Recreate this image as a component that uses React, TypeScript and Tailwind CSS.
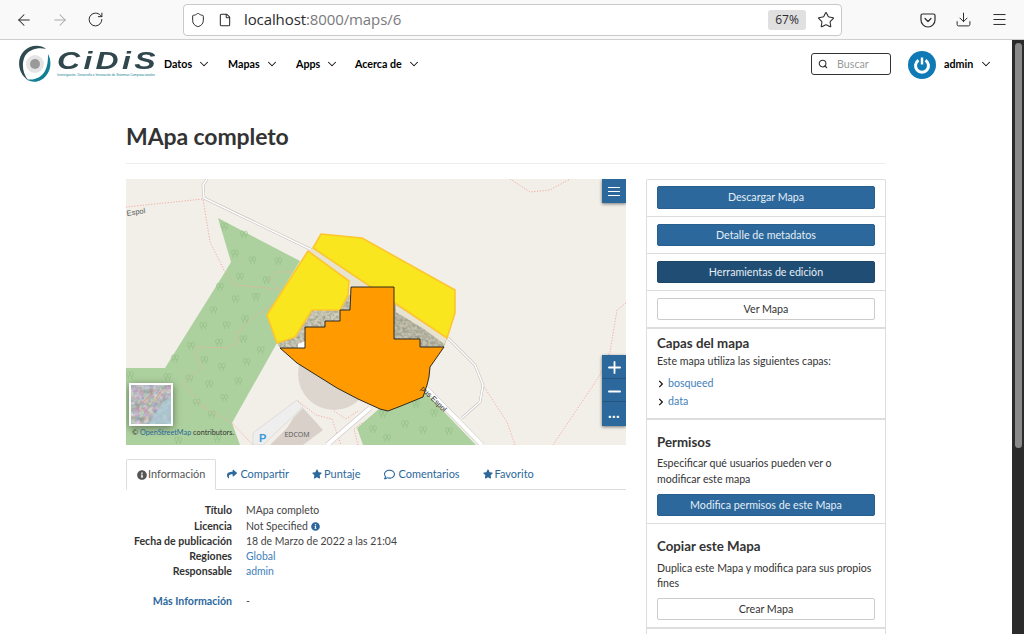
import { ArrowLeft, ArrowRight, RotateCw, Shield, File, Star, Download, Menu, Search, ChevronDown, Plus, Minus } from "lucide-react";
import { FaInfoCircle, FaShare, FaStar, FaRegComment, FaChevronRight } from "react-icons/fa";

const zt = (x: number, y: number): [number, number] => [x / 3 - 6, y / 3 - 4];
const trees: [number, number][] = [
  [313,155],[372,178],[345,235],[397,255],[475,258],[360,305],[300,335],[440,315],[347,372],[408,365],[280,405],[375,432],[320,450],[250,452],[297,502],[370,492],[213,512],[422,525],[380,560],[253,555],[305,575],[165,550],[143,605],[208,610],[268,627],[355,618],[313,668],[230,682],[275,718],[175,795],[292,790],[30,600],
].map(([x, y]) => zt(x, y));
const trees2: [number, number][] = [[257,235],[290,225],[308,234],[279,245],[297,251],[323,252],[261,259],[247,250]];

function MapArt() {
  return (
    <svg viewBox="0 0 500 266" className="block w-full h-full">
      <defs>
        <filter id="noise" x="0" y="0" width="100%" height="100%" colorInterpolationFilters="sRGB">
          <feTurbulence type="fractalNoise" baseFrequency="0.35" numOctaves="2" seed="4" />
          <feColorMatrix values="0 0 0 0 0.42  0 0 0 0 0.46  0 0 0 0 0.36  0.7 0.7 0 0 -0.5" />
          <feComposite in2="SourceAlpha" operator="in" />
          <feMerge>
            <feMergeNode in="SourceGraphic" />
            <feMergeNode />
          </feMerge>
        </filter>
      </defs>
      <rect width="500" height="266" fill="#f2efe9" />
      <polygon points="92,39 174,82 141,136 151,164 106,244 114,266 0,266 0,189 39,189 99,93 105,83" fill="#add19e" />
      <polygon points="254,229 231,249 237,266 350,266 299,213" fill="#add19e" />
      {[...trees, ...trees2].map(([x, y], i) => (
        <g key={i} fill="none" stroke="#94bf86" strokeWidth="0.7">
          <ellipse cx={x - 1.8} cy={y - 1} rx="1.6" ry="2.4" />
          <ellipse cx={x + 1.8} cy={y - 1} rx="1.6" ry="2.4" />
          <path d={`M${x - 1.8} ${y + 1}v3M${x + 1.8} ${y + 1}v3`} />
        </g>
      ))}
      <circle cx="208" cy="195" r="36" fill="#ddd6cf" />
      <polygon points="127,254 171,221 177,228 137,266 127,266" fill="#eeeeee" stroke="#d5d0ca" strokeWidth="0.6" />
      <polygon points="144,266 161,249 168,238 177,229 197,251 177,266" fill="#d9d0c9" />
      <g fill="none" stroke="#f7a9a1" strokeWidth="1" strokeDasharray="1.2 1.6">
        <path d="M0 28L77 20L84 63L99 93L109 106L141 109L154 111L144 101L151 93L167 93" />
        <path d="M151 123L131 136L112 153L111 164L101 169L71 168L69 176L76 189L57 203L74 226L106 244L127 266" />
        <path d="M384 0L404 13L424 11L444 0" />
        <path d="M500 124L491 131L484 173L474 196L427 266" />
        <path d="M357 206L381 243L389 266" />
        <path d="M208 232L220 240L232 232M172 222L190 236L206 240L215 266M236 244L228 250L232 266" />
      </g>
      <g fill="none" strokeLinejoin="round">
        <path d="M81 0L77 6L78 19L188 72M322 159L349 186L357 206L354 223L336 239" stroke="#bdb9b4" strokeWidth="2.6" />
        <path d="M81 0L77 6L78 19L188 72M322 159L349 186L357 206L354 223L336 239" stroke="#ffffff" strokeWidth="1.6" />
        <path d="M299 208L356 266M244 229L201 266" stroke="#c9c5bf" strokeWidth="5" />
        <path d="M299 208L356 266M244 229L201 266" stroke="#ffffff" strokeWidth="4" />
      </g>
      <polygon points="268,124 321,159 318,168 294,168 268,160" fill="#c7c2b2" filter="url(#noise)" />
      <polygon points="270,126 321,159 318,165 298,150 270,133" fill="#e8e3d0" />
      <polygon points="182,72 187,69 268,124 268,128 225,108 223,102" fill="#e8e3d0" />
      <polygon points="186,131 224,116 224,131 214,142 199,148 179,148 179,169 154,169 151,164 169,158" fill="#d4d0c0" filter="url(#noise)" />
      <polygon points="172,165 179,162 179,169 172,169" fill="#ffffff" />
      <polygon points="195,55 236,59 329,111 329,134 321,159 187,69" fill="#f9e61e" stroke="#fdc62e" strokeWidth="1.6" strokeLinejoin="round" />
      <polygon points="182,72 223,102 222,116 214,131 186,131 169,158 151,164 141,136" fill="#f9e61e" stroke="#fdc62e" strokeWidth="1.6" strokeLinejoin="round" />
      <polygon points="154,169 179,169 179,148 199,148 199,142 214,142 214,131 224,131 225,108 268,108 268,160 294,160 294,168 318,168 304,188 303,198 301,206 297,218 275,227 262,232 254,230 232,220 211,209 171,184" fill="#ff9b00" stroke="#1a1a1a" strokeWidth="0.9" strokeLinejoin="round" />
      <text x="0.500" y="36" transform="rotate(-9 7 33)" fontSize="7.5" fill="#555" fontFamily="Liberation Sans, sans-serif">Espol</text>
      <text x="296" y="214" transform="rotate(45 300 210)" fontSize="7.5" fill="#333" fontFamily="Liberation Sans, sans-serif">pus Espol</text>
      <text x="171" y="258" textAnchor="middle" fontSize="7" fill="#555" fontFamily="Open Sans, sans-serif">EDCOM</text>
      <text x="133" y="263" fontSize="11" fontWeight="700" fill="#3a9bdc" fontFamily="Liberation Sans, sans-serif">P</text>
    </svg>
  );
}

function Minimap() {
  return (
    <svg viewBox="0 0 40 39" className="block w-full h-full">
      <defs>
        <filter id="mini" x="0" y="0" width="100%" height="100%" colorInterpolationFilters="sRGB">
          <feTurbulence type="fractalNoise" baseFrequency="0.22" numOctaves="3" seed="9" />
          <feColorMatrix values="0.4 0.1 0.1 0 0.42  0.1 0.4 0.1 0 0.42  0.1 0.1 0.4 0 0.43  0 0 0 0 1" />
        </filter>
      </defs>
      <rect width="40" height="39" filter="url(#mini)" />
      <path d="M18 39L25 27L33 16L40 12V39Z" fill="#a9cbd6" opacity="0.75" />
      <path d="M4 26L22 6M12 30L32 4" stroke="#cf9578" strokeWidth="1" opacity="0.7" fill="none" />
    </svg>
  );
}

function Logo() {
  return (
    <div className="flex items-start shrink-0 w-[136px] h-[38px]">
      <svg width="32" height="38" viewBox="0 0 32 38" className="shrink-0">
        <circle cx="16" cy="19" r="9" fill="#e4e4e4" />
        <circle cx="16" cy="19" r="5" fill="#9a9a9a" />
        <path d="M9 35C-1 29-3 14 5 6C11 0 21-1 27 4C20 2 10 4 6 11C2 19 4 29 9 35Z" fill="#2f4a50" />
        <path d="M29 9C34 18 31 30 22 35C17 38 11 37 7 34C14 36 22 33 26 26C29 20 29 14 29 9Z" fill="#137f95" />
      </svg>
      <div className="ml-[6px] flex flex-col mt-[4px]">
        <span className="block h-[24px] w-[96px] text-[#30474d] leading-[24px] text-[24px] font-bold italic tracking-[2.500px] origin-left scale-x-[1.33] font-['Liberation_Sans',sans-serif]">CiDiS</span>
        <span className="block whitespace-nowrap text-[3.200px] leading-[4px] text-[#137f95] font-['Liberation_Sans',sans-serif]">Investigación, Desarrollo e Innovación de Sistemas Computacionales</span>
      </div>
    </div>
  );
}

function NavItem({ label, w }: { label: string; w: string }) {
  return (
    <div className={`flex items-center ${w}`}>
      <span className="font-bold text-black text-[10.7px]">{label}</span>
      <ChevronDown size={14} strokeWidth={1.8} className="ml-[5px] text-[#111]" />
    </div>
  );
}

function Btn({ label, kind = "blue", h = "h-[22px]" }: { label: string; kind?: "blue" | "dark" | "white"; h?: string }) {
  const cls =
    kind === "blue"
      ? "bg-[#2c689c] border-[#285f8e] text-[#e4eef6]"
      : kind === "dark"
        ? "bg-[#204d74] border-[#1d4568] text-[#e4eef6]"
        : "bg-white border-[#cccccc] text-[#333]";
  return <div className={`${h} rounded-[2px] border flex items-center justify-center text-[10.7px] ${cls}`}>{label}</div>;
}

function Row({ label, children, link, className = "h-[15px]" }: { label: string; children: React.ReactNode; link?: boolean; className?: string }) {
  return (
    <div className={`flex items-center ${className}`}>
      <div className={`w-[106px] text-right font-bold whitespace-nowrap text-[10.600px] ${link ? "text-[#2c689c]" : "text-[#333]"}`}>{label}</div>
      <div className="ml-[14px] flex items-center text-[#444] text-[10.450px]">{children}</div>
    </div>
  );
}

function Tab({ icon, label, active }: { icon: React.ReactNode; label: string; active?: boolean }) {
  return (
    <div className={active ? "h-[31px] -mb-px pl-[10px] pr-[9.500px] flex items-center gap-[1px] bg-white border border-[#ddd] border-b-white rounded-t-[2px] text-[#555]" : "h-[30px] px-[11.500px] flex items-center gap-[2px] text-[#2c689c]"}>
      {icon}
      <span>{label}</span>
    </div>
  );
}

export default function App() {
  return (
    <div className="h-[634px] w-[1024px] overflow-hidden bg-white flex flex-col font-['Lato',sans-serif]">
      <header className="h-[40px] shrink-0 bg-[#f9f9fa] border-b border-[#cfcfd1] flex items-center text-[#2b2b2e]">
        <div className="w-[183px] flex items-center pl-[15px] gap-[18px] shrink-0">
          <ArrowLeft size={18} strokeWidth={1.4} />
          <ArrowRight size={18} strokeWidth={1.4} className="text-[#a9a9ab]" />
          <RotateCw size={17} strokeWidth={1.4} />
        </div>
        <div className="w-[659px] h-[32px] bg-white border border-[#c9c9cb] rounded-[4px] flex items-center pl-[6px] pr-[5px] shrink-0">
          <Shield size={16} strokeWidth={1.5} />
          <File size={14} strokeWidth={1.8} className="ml-[12px]" />
          <span className="ml-[12px] text-[15px] font-['Open_Sans',sans-serif] tracking-[-0.1px]">localhost<span className="text-[#7a7a7d]">:8000/maps/6</span></span>
          <div className="ml-auto h-[20px] w-[38px] rounded-[3px] bg-[#e0e0e1] text-[12px] flex items-center justify-center font-['Open_Sans',sans-serif]">67%</div>
          <Star size={18} strokeWidth={1.4} className="ml-[11px] mr-[1px]" />
        </div>
        <div className="flex-1 flex items-center pl-[78px] gap-[19px]">
          <svg width="16" height="16" viewBox="0 0 16 16" fill="none" stroke="currentColor" strokeWidth="1.2" strokeLinecap="round" strokeLinejoin="round">
            <path d="M2.5 2h11a1.5 1.5 0 0 1 1.5 1.5V8a7 7 0 0 1-14 0V3.500A1.500 1.500 0 0 1 2.500 2Z" />
            <path d="M5 6.500L8 9.500L11 6.500" />
          </svg>
          <Download size={17} strokeWidth={1.4} />
          <Menu size={17} strokeWidth={1.4} />
        </div>
      </header>

      <div className="flex-1 min-h-0 flex">
        <main className="w-[1012px] shrink-0 overflow-hidden text-[10.7px] text-[#333]">
          <nav className="h-[48px] flex items-center pl-[19px]">
            <Logo />
            <div className="flex items-center ml-[9px]">
              <NavItem label="Datos" w="w-[64px]" />
              <NavItem label="Mapas" w="w-[68px]" />
              <NavItem label="Apps" w="w-[59px]" />
              <NavItem label="Acerca de" w="w-[80px]" />
            </div>
            <div className="ml-[376px] w-[80px] h-[22px] border border-[#333] rounded-[3px] flex items-center pl-[6px]">
              <Search size={10} strokeWidth={2.6} className="text-[#333]" />
              <span className="ml-[9px] text-[#9a9a9a]">Buscar</span>
            </div>
            <div className="ml-[17px] mt-[2px] w-[28px] h-[28px] rounded-full bg-[#0f7ab5] flex items-center justify-center">
              <svg width="18" height="18" viewBox="0 0 18 18" fill="none" stroke="#fff" strokeWidth="3">
                <path d="M5.500 4.200a6.500 6.500 0 1 0 7 0" />
                <path d="M9 1.500V8.500" strokeWidth="2.400" />
              </svg>
            </div>
            <span className="ml-[8px] font-bold text-black">admin</span>
            <ChevronDown size={14} strokeWidth={1.8} className="ml-[6px] text-[#111]" />
          </nav>

          <div className="ml-[126px] w-[760px]">
            <div className="mt-[25px] h-[51px] border-b border-[#eeeeee]">
              <h1 className="text-[23px] leading-[46px] font-bold text-[#333] tracking-[-0.1px]">MApa completo</h1>
            </div>
            <div className="mt-[15px] flex items-start">
              <div className="w-[500px] shrink-0">
                <div className="relative h-[266px] overflow-hidden">
                  <MapArt />
                  <div className="absolute right-0 top-0 w-[24px] h-[24px] bg-[#2c689c] flex flex-col items-center justify-center gap-[3px] shadow-[0_1px_3px_rgba(0,0,0,0.5)]">
                    <div className="w-[12px] h-px bg-white" />
                    <div className="w-[12px] h-px bg-white" />
                    <div className="w-[12px] h-px bg-white" />
                  </div>
                  <div className="absolute right-0 top-[176px] w-[24px] h-[71px] bg-[#2c689c] flex flex-col text-white shadow-[0_1px_3px_rgba(0,0,0,0.5)] divide-y divide-[#25567f]">
                    <div className="flex-1 flex items-center justify-center pt-[2px]"><Plus size={19} strokeWidth={2.3} /></div>
                    <div className="flex-1 flex items-center justify-center pt-[2px]"><Minus size={19} strokeWidth={2.3} /></div>
                    <div className="flex-1 flex items-center justify-center text-[15px] font-bold leading-none tracking-[0.5px] pb-[3px]">...</div>
                  </div>
                  <div className="absolute left-[3px] top-[204px] w-[44px] h-[43px] border-2 border-white shadow-[0_2px_8px_rgba(0,0,0,0.45)]">
                    <Minimap />
                  </div>
                  <div className="absolute left-[6px] bottom-[7px] text-[7.300px] text-[#333] leading-[10px]">© <span className="text-[#2c689c]">OpenStreetMap</span> contributors.</div>
                </div>

                <div className="mt-[14px] h-[31px] flex items-end border-b border-[#ddd] text-[10.950px]">
                  <Tab active label="Información" icon={<FaInfoCircle size={10} className="text-[#555]" />} />
                  <Tab label="Compartir" icon={<FaShare size={10} className="mr-[1px]" />} />
                  <Tab label="Puntaje" icon={<FaStar size={10} />} />
                  <Tab label="Comentarios" icon={<FaRegComment size={11} className="mr-[2px]" />} />
                  <Tab label="Favorito" icon={<FaStar size={10} />} />
                </div>

                <div className="mt-[12px] flex flex-col">
                  <Row label="Título" className="h-[17px]">MApa completo</Row>
                  <Row label="Licencia">Not Specified <FaInfoCircle size={9} className="ml-[3px] text-[#2c689c]" /></Row>
                  <Row label="Fecha de publicación">18 de Marzo de 2022 a las 21:04</Row>
                  <Row label="Regiones"><span className="text-[#3f81ba]">Global</span></Row>
                  <Row label="Responsable"><span className="text-[#3f81ba]">admin</span></Row>
                  <Row label="Más Información" link className="mt-[15px] h-[15px]">-</Row>
                </div>
              </div>

              <aside className="ml-[20px] w-[240px] shrink-0 border border-[#ddd] border-b-0 rounded-t-[2px] text-[10.600px]">
                <div className="px-[10px] pt-[6px] pb-[7px] border-b border-[#ddd]"><Btn label="Descargar Mapa" h="h-[23px]" /></div>
                <div className="px-[10px] py-[7px] border-b border-[#ddd]"><Btn label="Detalle de metadatos" /></div>
                <div className="px-[10px] py-[7px] border-b border-[#ddd]"><Btn label="Herramientas de edición" kind="dark" /></div>
                <div className="px-[10px] py-[7px] border-b-2 border-[#ddd]"><Btn label="Ver Mapa" kind="white" /></div>
                <div className="px-[10px] h-[91px] border-b-2 border-[#ddd] pt-[4px]">
                  <h3 className="text-[13.300px] leading-[20px] font-bold text-[#333]">Capas del mapa</h3>
                  <p className="leading-[16px] text-[#333]">Este mapa utiliza las siguientes capas:</p>
                  <div className="mt-[6px] h-[18px] flex items-center"><FaChevronRight size={8} className="text-[#111] mr-[3px]" /><span className="text-[#3f81ba]">bosqueed</span></div>
                  <div className="h-[18px] flex items-center"><FaChevronRight size={8} className="text-[#111] mr-[3px]" /><span className="text-[#3f81ba]">data</span></div>
                </div>
                <div className="px-[10px] pt-[13px] pb-[7px] border-b border-[#ddd]">
                  <h3 className="text-[13.300px] leading-[18px] font-bold text-[#333]">Permisos</h3>
                  <p className="mt-[4px] leading-[16px] text-[#333]">Especificar qué usuarios pueden ver o modificar este mapa</p>
                  <div className="mt-[7px]"><Btn label="Modifica permisos de este Mapa" /></div>
                </div>
                <div className="px-[10px] pt-[13px] pb-[7px] border-b-2 border-[#ddd]">
                  <h3 className="text-[13.300px] leading-[18px] font-bold text-[#333]">Copiar este Mapa</h3>
                  <p className="mt-[6px] leading-[15px] text-[#333]">Duplica este Mapa y modifica para sus propios fines</p>
                  <div className="mt-[7px]"><Btn label="Crear Mapa" kind="white" /></div>
                </div>
                <div className="h-[20px]" />
              </aside>
            </div>
          </div>
        </main>
        <div className="w-[12px] shrink-0 bg-[#2b2b2b] pt-[3px] flex justify-center">
          <div className="w-[7px] h-[405px] rounded-full bg-[#8a8a8a]" />
        </div>
      </div>
    </div>
  );
}
